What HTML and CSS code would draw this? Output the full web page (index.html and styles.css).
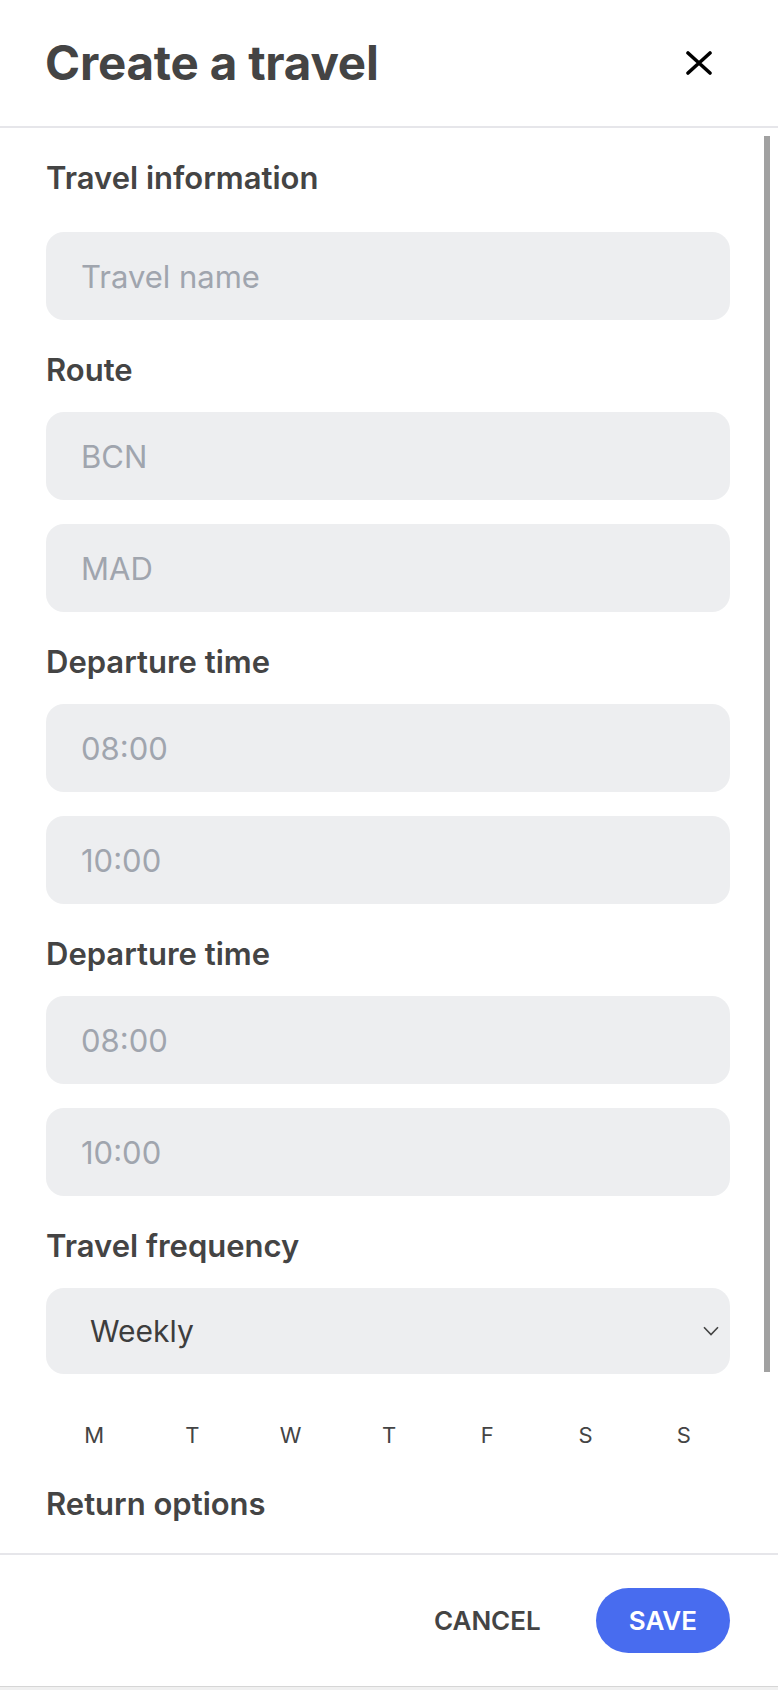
FILE: index.html
```html
<!DOCTYPE html>
<html lang="en">
<head>
<meta charset="utf-8">
<title>Create a travel</title>
<link rel="stylesheet" href="styles.css">
</head>
<body>
<div class="panel">
  <header class="head">
    <h1 class="title">Create a travel</h1>
    <button class="close" type="button" aria-label="Close">
      <svg width="26" height="24" viewBox="0 0 26 24"><path d="M2 2L24 22M24 2L2 22" stroke="#000" stroke-width="3.6" stroke-linecap="round" fill="none"/></svg>
    </button>
  </header>
  <div class="scroll">
    <form class="form">
      <section class="group first">
        <h2 class="label">Travel information</h2>
        <input class="field" type="text" placeholder="Travel name">
      </section>
      <section class="group">
        <h2 class="label">Route</h2>
        <input class="field" type="text" placeholder="BCN">
        <input class="field" type="text" placeholder="MAD">
      </section>
      <section class="group">
        <h2 class="label">Departure time</h2>
        <input class="field" type="text" placeholder="08:00">
        <input class="field" type="text" placeholder="10:00">
      </section>
      <section class="group">
        <h2 class="label">Departure time</h2>
        <input class="field" type="text" placeholder="08:00">
        <input class="field" type="text" placeholder="10:00">
      </section>
      <section class="group">
        <h2 class="label">Travel frequency</h2>
        <div class="select">
          <span class="select-value">Weekly</span>
          <svg class="chev" width="16" height="10" viewBox="0 0 16 10"><path d="M1 1.2L8 8.6L15 1.2" stroke="#444" stroke-width="1.6" fill="none"/></svg>
        </div>
      </section>
      <div class="days">
        <span>M</span><span>T</span><span>W</span><span>T</span><span>F</span><span>S</span><span>S</span>
      </div>
      <section class="group">
        <h2 class="label">Return options</h2>
      </section>
    </form>
    <div class="scrollbar" aria-hidden="true"><div class="thumb"></div></div>
  </div>
  <footer class="foot">
    <button class="btn-text" type="button">CANCEL</button>
    <button class="btn-primary" type="button">SAVE</button>
  </footer>
</div>
</body>
</html>
```
FILE: styles.css
```css
* { box-sizing: border-box; }
html, body { margin: 0; padding: 0; }
body {
  background: #f0f0f0;
  font-family: Inter, "Noto Sans", sans-serif;
  color: #444;
}
.panel {
  height: 1687px;
  background: #fff;
  display: flex;
  flex-direction: column;
  border-bottom: 1px solid #d6d6d6;
}
.head {
  flex: none;
  height: 128px;
  border-bottom: 2px solid #e6e6ea;
  display: flex;
  align-items: center;
  justify-content: space-between;
  padding: 0 66px 0 45px;
}
.title {
  margin: 0;
  font-size: 47.5px;
  line-height: 1;
  font-weight: 700;
  color: #444;
  letter-spacing: -0.2px;
}
.close {
  border: 0;
  background: none;
  padding: 0;
  display: flex;
  cursor: pointer;
}
.scroll {
  flex: none;
  height: 1425px;
  overflow: hidden;
  display: flex;
}
.form {
  flex: 1;
  min-width: 0;
  display: flex;
  flex-direction: column;
  gap: 32px;
  padding: 32px 34px 0 46px;
}
.scrollbar {
  flex: none;
  width: 14px;
  padding: 8px 8px 0 0;
}
.thumb {
  width: 6px;
  height: 1236px;
  background: #a1a1a1;
}
.group {
  display: flex;
  flex-direction: column;
  gap: 24px;
}
.group.first { gap: 36px; }
.label {
  margin: 0;
  font-size: 31px;
  line-height: 36px;
  font-weight: 600;
  color: #444;
}
.field {
  height: 88px;
  border: 0;
  border-radius: 18px;
  background: #edeef0;
  padding: 0 35px;
  font-family: inherit;
  font-size: 31px;
  color: #444;
  outline: none;
}
.field::placeholder { color: #a0a5ae; }
.select {
  height: 86px;
  border-radius: 18px;
  background: #edeef0;
  display: flex;
  align-items: center;
  justify-content: space-between;
  padding: 0 11px 0 44px;
}
.select-value {
  font-size: 30px;
  color: #3d3d3d;
}
.days {
  display: grid;
  grid-template-columns: repeat(7, 1fr);
  height: 48px;
  margin: 0 -3px 0 -1px;
  padding-top: 10px;
  line-height: 38px;
  font-size: 22px;
  color: #444;
  text-align: center;
}
.foot {
  flex: 1;
  border-top: 2px solid #e6e6ea;
  display: flex;
  align-items: center;
  justify-content: flex-end;
  gap: 31px;
  padding: 0 48px 0 0;
}
.btn-text {
  border: 0;
  background: none;
  font-family: inherit;
  font-size: 26px;
  font-weight: 600;
  color: #444;
  padding: 0 24px;
  height: 65px;
}
.btn-primary {
  border: 0;
  background: #486cef;
  color: #fff;
  font-family: inherit;
  font-size: 26px;
  font-weight: 600;
  height: 65px;
  padding: 0 33px;
  border-radius: 33px;
}
```
